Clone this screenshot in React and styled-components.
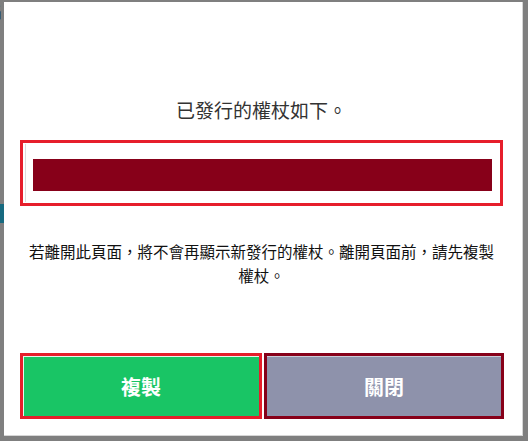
import React from 'react';
import styled, { createGlobalStyle } from 'styled-components';

const GlobalStyle = createGlobalStyle`
  html, body {
    margin: 0;
    padding: 0;
    background-color: #7f7f7f;
    font-family: "Noto Sans CJK TC", "Noto Sans", "Liberation Sans", sans-serif;
  }
`;

const Page = styled.div`
  width: 528px;
  height: 441px;
  overflow: hidden;
  background-color: #7f7f7f;
`;

const PageHeading = styled.div`
  height: 22px;
  margin-left: -14px;
  font-size: 22px;
  line-height: 22px;
  font-weight: bold;
  color: #111;
`;

const PageBand = styled.div`
  margin-top: 182px;
  height: 19px;
  width: 60px;
  background-color: #176a80;
`;

const Overlay = styled.div`
  position: fixed;
  inset: 0;
  padding: 2px 0 0 4px;
`;

const Modal = styled.div`
  width: 519px;
  height: 434px;
  box-sizing: border-box;
  background-color: #fff;
  border-right: 1px solid #d6d6d6;
  border-bottom: 1px solid #d6d6d6;
  padding: 94px 0 0 16px;
  display: flex;
  flex-direction: column;
`;

const Title = styled.h2`
  margin: 0;
  width: 483px;
  font-size: 19px;
  line-height: 28px;
  font-weight: normal;
  color: #333;
  text-align: center;
`;

const TokenBox = styled.div`
  margin-top: 16px;
  width: 483px;
  height: 66px;
  box-sizing: border-box;
  border: 3px solid #e61e2b;
  padding: 1px 3px 1px 2px;
  display: flex;
`;

const TokenField = styled.div`
  flex: 1;
  border-left: 1px solid #dcdcdc;
  padding: 15px 5px 11px 7px;
  display: flex;
`;

const TokenMask = styled.div`
  flex: 1;
  background-color: #870019;
`;

const Notice = styled.p`
  margin: 33px 0 0;
  width: 483px;
  box-sizing: border-box;
  padding: 0 7px;
  font-size: 15.5px;
  line-height: 24px;
  color: #111;
  text-align: center;
`;

const Actions = styled.div`
  margin-top: 66px;
  display: flex;
  gap: 2px;
`;

const ActionButton = styled.button`
  width: ${({ $width }) => $width}px;
  height: 66px;
  box-sizing: border-box;
  border: 3px solid ${({ $ring }) => $ring};
  background-color: ${({ $bg }) => $bg};
  box-shadow: inset 0 1px 0 ${({ $light }) => $light}, inset ${({ $side }) => $side} 0 0 ${({ $light }) => $light};
  color: #fff;
  font-family: "Noto Sans CJK TC", "Noto Sans", sans-serif;
  font-size: 20px;
  font-weight: bold;
  padding: 0;
  cursor: pointer;
`;

export default function App() {
  return (
    <>
      <GlobalStyle />
      <Page>
        <PageHeading>G</PageHeading>
        <PageBand />
      </Page>
      <Overlay>
        <Modal>
          <Title>已發行的權杖如下。</Title>
          <TokenBox>
            <TokenField>
              <TokenMask />
            </TokenField>
          </TokenBox>
          <Notice>
            若離開此頁面，將不會再顯示新發行的權杖。離開頁面前，請先複製權杖。
          </Notice>
          <Actions>
            <ActionButton $width={242} $ring="#e61e2b" $bg="#19c565" $light="#e8f5ec" $side="1px">
              複製
            </ActionButton>
            <ActionButton $width={240} $ring="#870019" $bg="#8e92ab" $light="#c9ccd8" $side="0">
              關閉
            </ActionButton>
          </Actions>
        </Modal>
      </Overlay>
    </>
  );
}
